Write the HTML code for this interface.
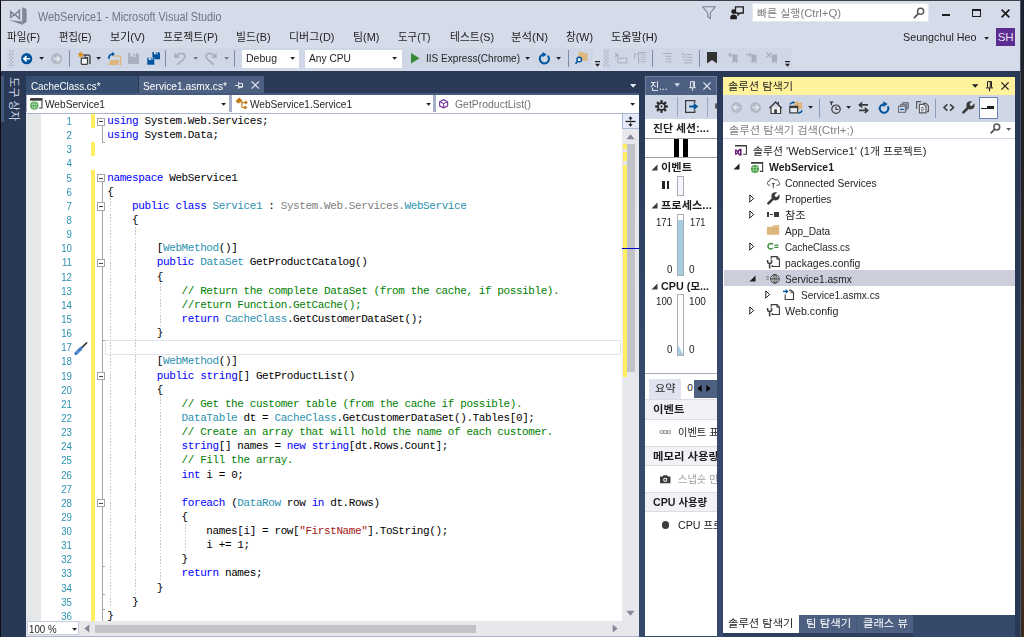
<!DOCTYPE html>
<html lang="ko">
<head>
<meta charset="utf-8">
<title>WebService1 - Microsoft Visual Studio</title>
<style>
*{box-sizing:border-box;margin:0;padding:0}
html,body{width:1024px;height:637px;overflow:hidden}
body{position:relative;background:#293955;font-family:"Liberation Sans","Noto Sans CJK KR",sans-serif;font-size:11px;color:#1e1e1e}
.a{position:absolute}
.t{position:absolute;white-space:nowrap;line-height:16px;height:16px;transform-origin:0 50%}
svg{position:absolute;overflow:visible}
#chrome{left:0;top:0;width:1021px;height:71px;background:#d6dbe9}
.h{font-size:0.97em}
.code{font-family:"Liberation Mono","NanumGothic",monospace;font-size:11px;letter-spacing:-0.41px;white-space:pre;line-height:14px;height:14px;color:#000}
.k{color:#0000ff}.ty{color:#2b91af}.c{color:#008000}.s{color:#a31515}.g{color:#808080}
.ln{position:absolute;left:41px;width:32px;text-align:right;color:#2b91af;font-family:"Liberation Sans","Noto Sans CJK KR",sans-serif;font-size:11px;line-height:14px;height:14px;transform:scaleX(0.88);transform-origin:100% 50%}
</style>
</head>
<body>
<div id="chrome" class="a"></div>
<div class="a" style="left:0;top:0;width:1021px;height:1px;background:#3f3f46"></div>
<div class="a" style="left:0;top:0;width:1px;height:637px;background:#0c0c12"></div>
<div class="a" style="left:1020px;top:0;width:1px;height:637px;background:#4a5268"></div>
<div class="a" style="left:1021px;top:0;width:3px;height:637px;background:linear-gradient(#1b1f2a,#2a2320 40%,#4a3320 80%,#3a2a1c)"></div>

<!-- title -->
<svg id="vslogo" style="left:0px;top:0px" width="30" height="28" viewBox="0 0 30 28"><path d="M22.200 7.200L26.600 9V22L22.200 24.700z" fill="#828795"/><path d="M8.800 20.100L22.300 21.500V24.700z" fill="#828795"/><path d="M10.700 11.600L14.300 14.500 10.700 17.400zM19.400 10.400L14.900 14.500 19.400 18.600z" fill="none" stroke="#828795" stroke-width="1.500" stroke-linejoin="miter"/></svg>
<div class="t" id="title" style="left:37.5px;top:8.8px;font-size:12px;color:#6f7480;transform:scaleX(0.9010);">WebService1 - Microsoft Visual Studio</div>

<div class="a" style="left:752px;top:3px;width:177px;height:19px;background:#fff;border:1px solid #e5e8f0"></div>
<div class="t" id="ql" style="left:757px;top:5px;color:#7e7e7e;transform:scaleX(1.0293);"><span class="h">빠른 실행</span>(Ctrl+Q)</div>

<!-- menu -->
<div class="t m" style="left:7px;top:29px;transform:scaleX(0.9622);">파일(F)</div>
<div class="t m" style="left:59px;top:29px;transform:scaleX(0.9311);">편집(E)</div>
<div class="t m" style="left:110px;top:29px;transform:scaleX(1.0027);">보기(V)</div>
<div class="t m" style="left:163px;top:29px;transform:scaleX(0.9972);">프로젝트(P)</div>
<div class="t m" style="left:236px;top:29px;transform:scaleX(0.9884);">빌드(B)</div>
<div class="t m" style="left:289px;top:29px;transform:scaleX(0.9969);">디버그(D)</div>
<div class="t m" style="left:353px;top:29px;transform:scaleX(0.9959);">팀(M)</div>
<div class="t m" style="left:398px;top:29px;transform:scaleX(0.9476);">도구(T)</div>
<div class="t m" style="left:450px;top:29px;transform:scaleX(0.9771);">테스트(S)</div>
<div class="t m" style="left:511px;top:29px;transform:scaleX(1.0418);">분석(N)</div>
<div class="t m" style="left:566px;top:29px;transform:scaleX(0.9697);">창(W)</div>
<div class="t m" style="left:611px;top:29px;transform:scaleX(1.0188);">도움말(H)</div>
<div class="t" id="user" style="left:903px;top:29px;transform:scaleX(0.9769);">Seungchul Heo</div>
<div class="a" style="left:996px;top:28px;width:19px;height:18px;background:#5c2d91;color:#eadff5;font-size:11.500px;line-height:18px;text-align:center;letter-spacing:-0.200px">SH</div>

<!-- toolbar strips -->
<div class="a" style="left:7px;top:47.700px;width:586px;height:21px;background:#cfd6e5"></div>
<div class="a" style="left:602.500px;top:47.700px;width:189px;height:21px;background:#cfd6e5"></div>
<div class="a" style="left:242px;top:50px;width:57px;height:18px;background:#fff"></div>
<div class="t" style="left:246px;top:50.2px;transform:scaleX(0.9561);">Debug</div>
<div class="a" style="left:305px;top:50px;width:97px;height:18px;background:#fff"></div>
<div class="t" style="left:309px;top:50.2px;transform:scaleX(0.9282);">Any CPU</div>
<div class="t" style="left:426px;top:50.2px;transform:scaleX(0.9153);">IIS Express(Chrome)</div>
<!-- title bar icons -->
<svg style="left:702px;top:5.5px" width="14" height="14" viewBox="0 0 14 14"><path d="M0.8 0.8h12.4L8.3 7v5.6L5.7 10.6V7z" fill="none" stroke="#7a8090" stroke-width="1.1" stroke-linejoin="round"/></svg>
<svg style="left:729.5px;top:5.5px" width="14" height="14" viewBox="0 0 14 14"><path d="M5.5 0.8h7.8v6.2h-3.3l-2 2v-2h-2.5z" fill="#d6dbe9" stroke="#1e1e1e" stroke-width="1.3"/><circle cx="3.6" cy="5.6" r="2.3" fill="#1e1e1e"/><path d="M0.3 13.2v-2.2c0-1.6 1.3-2.6 3.3-2.6s3.3 1 3.3 2.6v2.2z" fill="#1e1e1e"/></svg>
<svg style="left:913px;top:7px" width="12" height="12" viewBox="0 0 12 12"><circle cx="7.6" cy="4.3" r="3.1" fill="none" stroke="#555" stroke-width="1.4"/><path d="M5.3 6.7L0.9 11.1" stroke="#555" stroke-width="1.8" fill="none"/></svg>
<div class="a" style="left:942px;top:13.6px;width:8.4px;height:2.8px;background:#1e1e1e"></div>
<div class="a" style="left:972px;top:9px;width:8.6px;height:8.2px;border:1.2px solid #1e1e1e;border-top-width:2.6px"></div>
<svg style="left:1000.5px;top:9px" width="9" height="9" viewBox="0 0 9 9"><path d="M0.6 0.6l7.8 7.8M8.4 0.6L0.6 8.4" stroke="#1e1e1e" stroke-width="1.7" fill="none"/></svg>
<svg style="left:983.5px;top:36.5px" width="5.2" height="3.2" viewBox="0 0 6 4"><path d="M0 0h6L3 3.4z" fill="#1e1e1e"/></svg>

<!-- toolbar 1 -->
<svg style="left:8.9px;top:50px" width="5" height="17" viewBox="0 0 5 17"><g fill="#a0a8be"><rect x="0" y="0.20" width="1.300" height="1.300"/><rect x="3.300" y="0.20" width="1.300" height="1.300"/><rect x="0" y="3.85" width="1.300" height="1.300"/><rect x="3.300" y="3.85" width="1.300" height="1.300"/><rect x="0" y="7.50" width="1.300" height="1.300"/><rect x="3.300" y="7.50" width="1.300" height="1.300"/><rect x="0" y="11.15" width="1.300" height="1.300"/><rect x="3.300" y="11.15" width="1.300" height="1.300"/><rect x="0" y="14.80" width="1.300" height="1.300"/><rect x="3.300" y="14.80" width="1.300" height="1.300"/><rect x="1.650" y="2.00" width="1.300" height="1.300"/><rect x="1.650" y="5.65" width="1.300" height="1.300"/><rect x="1.650" y="9.30" width="1.300" height="1.300"/><rect x="1.650" y="12.95" width="1.300" height="1.300"/></g></svg>
<svg style="left:21px;top:52.8px" width="11.4" height="11.4" viewBox="0 0 12 12"><circle cx="6" cy="6" r="5.9" fill="#00539c"/><path d="M9.4 6H3.4M5.9 3.2L3 6l2.9 2.8" fill="none" stroke="#fff" stroke-width="1.7"/></svg>
<svg style="left:39px;top:57px" width="5.2" height="3.2" viewBox="0 0 6 4"><path d="M0 0h6L3 3.4z" fill="#1e1e1e"/></svg>
<svg style="left:50.8px;top:52.8px" width="11.4" height="11.4" viewBox="0 0 12 12"><circle cx="6" cy="6" r="5.9" fill="#b4b9c6"/><path d="M2.6 6h6M6.1 3.2L9 6 6.1 8.8" fill="none" stroke="#e6e9f1" stroke-width="1.7"/></svg>
<div class="a" style="left:69px;top:49.6px;width:1px;height:17.4px;background:#7f8aa6"></div>
<svg style="left:78px;top:51.8px" width="12.5" height="13" viewBox="0 0 12.5 13"><path d="M5.4 3.2h5.6c0.6 0 1 0.4 1 1v6.5c0 0.6-0.4 1-1 1" fill="none" stroke="#3b3b3b" stroke-width="1.3"/><rect x="3.3" y="6.2" width="6.2" height="6.2" rx="0.8" fill="#f3f4f8" stroke="#3b3b3b" stroke-width="1.2"/><path d="M7 2.2v3.3h3.2" fill="none" stroke="#3b3b3b" stroke-width="1"/><path d="M2.7 0v5.4M0 2.7h5.4M0.8 0.8l3.8 3.8M4.6 0.8L0.8 4.6" stroke="#e08a1e" stroke-width="1.1"/></svg>
<svg style="left:96px;top:57px" width="5.2" height="3.2" viewBox="0 0 6 4"><path d="M0 0h6L3 3.4z" fill="#1e1e1e"/></svg>
<svg style="left:107.5px;top:51.5px" width="13.5" height="13.5" viewBox="0 0 13.5 13.5"><path d="M5.2 4.2h7.4v8.6h-1" fill="none" stroke="#dcb67a" stroke-width="1.2"/><path d="M0.6 13l1.7-4.9h9.3L10 13z" fill="#dcb67a"/><path d="M1 6.8c-0.4-3 1.2-4.7 3.7-4.7" fill="none" stroke="#00539c" stroke-width="1.7"/><path d="M4 0l3 2.1-3 2.2z" fill="#00539c"/></svg>
<svg style="left:128px;top:53px" width="11" height="11" viewBox="0 0 11 11"><path d="M0 0h9.2L11 1.8V11H0z" fill="#a9afbd"/><rect x="2.4" y="0" width="5.6" height="3.6" fill="#cfd6e5"/><rect x="5.6" y="0.6" width="1.5" height="2.4" fill="#a9afbd"/></svg>
<svg style="left:146.8px;top:51.7px" width="13" height="13" viewBox="0 0 13 13"><path d="M5.4 0h6.4L13 1.2V7.2H5.4z" fill="#00539c"/><rect x="7" y="0" width="3.8" height="2.3" fill="#cfd6e5"/><rect x="9.2" y="0.4" width="1" height="1.5" fill="#00539c"/><path d="M0 5.6h6.4L7.6 6.8V13H0z" fill="#00539c" stroke="#cfd6e5" stroke-width="0.6"/><rect x="1.7" y="5.8" width="3.8" height="2.3" fill="#cfd6e5"/><rect x="3.9" y="6.2" width="1" height="1.5" fill="#00539c"/></svg>
<div class="a" style="left:165px;top:49.6px;width:1px;height:17.4px;background:#7f8aa6"></div>
<svg style="left:174px;top:51.500px" width="12" height="13" viewBox="0 0 12 13"><path d="M0.300 0.400V6H5.900z" fill="#a9afbd"/><path d="M2.800 3.600C5 0.600 10.900 0.300 10.900 4.600C10.900 7.600 6.500 9.600 3.700 12.100" fill="none" stroke="#a9afbd" stroke-width="1.800" stroke-linecap="round"/></svg>
<svg style="left:193px;top:56.800px" width="5.2" height="3.2" viewBox="0 0 6 4"><path d="M0 0h6L3 3.4z" fill="#77777c"/></svg>
<svg style="left:204.500px;top:51.500px" width="12" height="13" viewBox="0 0 12 13"><path d="M11.700 0.400V6H6.100z" fill="#a9afbd"/><path d="M9.200 3.600C7 0.600 1.100 0.300 1.100 4.600C1.100 7.600 5.500 9.600 8.300 12.100" fill="none" stroke="#a9afbd" stroke-width="1.800" stroke-linecap="round"/></svg>
<svg style="left:223.800px;top:56.800px" width="5.2" height="3.2" viewBox="0 0 6 4"><path d="M0 0h6L3 3.4z" fill="#77777c"/></svg>
<div class="a" style="left:234px;top:49.6px;width:1px;height:17.4px;background:#7f8aa6"></div>
<svg style="left:289.800px;top:57px" width="5.2" height="3.2" viewBox="0 0 6 4"><path d="M0 0h6L3 3.4z" fill="#1e1e1e"/></svg>
<svg style="left:392px;top:57px" width="5.2" height="3.2" viewBox="0 0 6 4"><path d="M0 0h6L3 3.4z" fill="#1e1e1e"/></svg>
<svg style="left:410.500px;top:53px" width="8.500" height="10.500" viewBox="0 0 8.500 10.500"><path d="M0 0L8.500 5.250 0 10.500z" fill="#388a34"/></svg>
<svg style="left:524.800px;top:57px" width="5.2" height="3.2" viewBox="0 0 6 4"><path d="M0 0h6L3 3.4z" fill="#1e1e1e"/></svg>
<svg style="left:537.500px;top:52px" width="12.500" height="12.500" viewBox="0 0 12.500 12.500"><path d="M9.800 3.700A4.600 4.600 0 1 1 5 2.400" fill="none" stroke="#00539c" stroke-width="2"/><path d="M4.600 0L8.600 2.500 4.600 5.200z" fill="#00539c"/></svg>
<svg style="left:556px;top:57px" width="5.2" height="3.2" viewBox="0 0 6 4"><path d="M0 0h6L3 3.4z" fill="#1e1e1e"/></svg>
<div class="a" style="left:567.500px;top:49.600px;width:1px;height:17.400px;background:#7f8aa6"></div>
<svg style="left:575px;top:51.800px" width="12.500" height="12.500" viewBox="0 0 12.500 12.500"><path d="M3.600 0h4l1 1.300h3.900v7.500H3.600z" fill="#dcb67a"/><circle cx="4.200" cy="7.600" r="2.300" fill="#e8f0fa" stroke="#00539c" stroke-width="1.400"/><path d="M2.700 9.300L0.500 11.800" stroke="#00539c" stroke-width="1.700"/></svg>
<svg style="left:594.500px;top:60.500px" width="5" height="6" viewBox="0 0 5 6"><rect x="0" y="0" width="5" height="1.200" fill="#1e1e1e"/><path d="M0 2.800h5L2.500 5.800z" fill="#1e1e1e"/></svg>
<!-- toolbar 2 -->
<svg style="left:604px;top:50px" width="5" height="17" viewBox="0 0 5 17"><g fill="#a0a8be"><rect x="0" y="0.20" width="1.300" height="1.300"/><rect x="3.300" y="0.20" width="1.300" height="1.300"/><rect x="0" y="3.85" width="1.300" height="1.300"/><rect x="3.300" y="3.85" width="1.300" height="1.300"/><rect x="0" y="7.50" width="1.300" height="1.300"/><rect x="3.300" y="7.50" width="1.300" height="1.300"/><rect x="0" y="11.15" width="1.300" height="1.300"/><rect x="3.300" y="11.15" width="1.300" height="1.300"/><rect x="0" y="14.80" width="1.300" height="1.300"/><rect x="3.300" y="14.80" width="1.300" height="1.300"/><rect x="1.650" y="2.00" width="1.300" height="1.300"/><rect x="1.650" y="5.65" width="1.300" height="1.300"/><rect x="1.650" y="9.30" width="1.300" height="1.300"/><rect x="1.650" y="12.95" width="1.300" height="1.300"/></g></svg>
<svg style="left:615px;top:52px" width="12.500" height="12" viewBox="0 0 12.500 12"><path d="M0.300 0L4.600 4.200 2.400 4.400 0.300 6z" fill="#a9afbd"/><rect x="2.800" y="6.200" width="9" height="4.600" fill="none" stroke="#a9afbd" stroke-width="1.100"/></svg>
<svg style="left:634px;top:52px" width="13" height="12" viewBox="0 0 13 12"><path d="M0.600 6.500V2.200H3.500" fill="none" stroke="#a9afbd" stroke-width="1.100"/><path d="M4.600 11.500V0.600H12.400" fill="none" stroke="#a9afbd" stroke-width="1.100"/><path d="M6.500 3h5.500M6.500 5.200h5.500M6.500 7.400h5.500M6.500 9.600h5.500" stroke="#b4bac8" stroke-width="1"/></svg>
<div class="a" style="left:652.200px;top:49.600px;width:1px;height:17.400px;background:#7f8aa6"></div>
<svg style="left:662px;top:53px" width="10" height="10" viewBox="0 0 10 10"><path d="M0.500 0.500h9M3.500 3.300h6M3.500 6.100h6M3.500 8.900h6" stroke="#a9afbd" stroke-width="1"/></svg>
<svg style="left:680.500px;top:52.500px" width="11.500" height="11" viewBox="0 0 11.500 11"><path d="M5 1.500h6.500M5 4.300h6.500M3 7.100h8.500M3 9.900h8.500" stroke="#a9afbd" stroke-width="1"/><path d="M0.500 1.800c0-1.500 3.200-1.500 3.200 0.300 0 1.200-1.600 1.300-1.600 2.800" fill="none" stroke="#a9afbd" stroke-width="1.100"/></svg>
<div class="a" style="left:698.800px;top:49.600px;width:1px;height:17.400px;background:#7f8aa6"></div>
<svg style="left:707.300px;top:52.200px" width="10" height="11.500" viewBox="0 0 10 11.500"><path d="M0 0h10v11.500L5 8 0 11.500z" fill="#333"/></svg>
<svg style="left:728px;top:52px" width="10" height="12" viewBox="0 0 10 12"><path d="M4.500 2.500h5v9L7 9.500l-2.500 2z" fill="#a9afbd"/><path d="M5.500 2.800H1M2.800 0.800L0.800 2.800 2.800 4.800" fill="none" stroke="#a9afbd" stroke-width="1.200"/></svg>
<svg style="left:746px;top:52px" width="11" height="12" viewBox="0 0 11 12"><path d="M5.500 2.500h5v9L8 9.500l-2.500 2z" fill="#a9afbd"/><path d="M0 2.800h5M3.200 0.800L5.200 2.800 3.200 4.800" fill="none" stroke="#a9afbd" stroke-width="1.200"/></svg>
<svg style="left:765.500px;top:52px" width="11.500" height="12" viewBox="0 0 11.500 12"><path d="M6 2.500h5v9L8.500 9.500 6 11.500z" fill="#a9afbd"/><path d="M0.500 0.500l5 5M5.500 0.500l-5 5" fill="none" stroke="#a9afbd" stroke-width="1.200"/></svg>
<svg style="left:784.500px;top:60.500px" width="5" height="6" viewBox="0 0 5 6"><rect x="0" y="0" width="5" height="1.200" fill="#1e1e1e"/><path d="M0 2.800h5L2.500 5.800z" fill="#1e1e1e"/></svg>
<div class="a" id="dockbg" style="left:26px;top:71px;width:989px;height:566px;background:linear-gradient(#293955 0,#2b3b5a 8%,#35496a 50%,#35496a 100%)"></div>
<!-- left autohide strip -->
<div class="a" style="left:1px;top:76px;width:3px;height:46px;background:#465a7d"></div>
<div class="t" id="toolbox" style="left:7.300px;top:76.500px;width:45px;height:14px;line-height:14px;font-size:11.5px;color:#d0d6e4;transform:rotate(90deg) translate(0,-14px);transform-origin:0 0"><span class="h">도구 상자</span></div>

<!-- doc tabs -->
<div class="a" style="left:26px;top:76px;width:112px;height:17px;background:#364e6f"></div>
<div class="t" style="left:30.500px;top:77.500px;color:#fff;transform:scaleX(0.8951);">CacheClass.cs*</div>
<div class="a" style="left:139px;top:76px;width:125.4px;height:17px;background:#4d6082"></div>
<div class="t" style="left:142.500px;top:77.500px;color:#fff;transform:scaleX(0.9283);">Service1.asmx.cs*</div>
<div class="a" style="left:26px;top:93px;width:613px;height:2px;background:#465a7d"></div>
<svg style="left:630.200px;top:84px" width="6.400" height="3.800" viewBox="0 0 10 6"><path d="M0 0h10L5 6z" fill="#e4e8f2"/></svg>
<!-- pin + close -->
<svg style="left:234.800px;top:81.800px" width="8" height="7" viewBox="0 0 8 7"><path d="M0 3.500h3.700M3.700 0v7M3.700 1.400h3.800v3.900H3.700M3.700 4.600h3.800" fill="none" stroke="#dfe3ee" stroke-width="1"/></svg>
<svg style="left:251.200px;top:81px" width="8.600" height="8" viewBox="0 0 8.600 8"><path d="M0.500 0.400l7.600 7.200M8.100 0.400L0.500 7.600" fill="none" stroke="#dde1ec" stroke-width="1.300"/></svg>
<!-- editor -->
<div class="a" id="ed" style="left:26px;top:95px;width:613px;height:542px;overflow:hidden;background:#fff">
<div class="a" style="left:0.00px;top:18.00px;width:15.40px;height:508.00px;background:#e6e7e8"></div>
<div class="a" style="left:64.70px;top:18.60px;width:4.40px;height:14.14px;background:#ffee62"></div>
<div class="a" style="left:64.70px;top:46.88px;width:4.40px;height:14.14px;background:#ffee62"></div>
<div class="a" style="left:64.70px;top:75.16px;width:4.40px;height:450.84px;background:#ffee62"></div>
<div class="a" style="left:78.80px;top:245.30px;width:516.20px;height:14.40px;background:#fff;border:1.5px solid #e3e3ee"></div>
<div class="a" style="left:84.30px;top:103.44px;width:1px;height:410.06px;background:repeating-linear-gradient(#c8c8c8 0,#c8c8c8 1.6px,transparent 1.6px,transparent 3.2px)"></div>
<div class="a" style="left:109.10px;top:131.72px;width:1px;height:367.64px;background:repeating-linear-gradient(#c8c8c8 0,#c8c8c8 1.6px,transparent 1.6px,transparent 3.2px)"></div>
<div class="a" style="left:133.90px;top:188.28px;width:1px;height:42.42px;background:repeating-linear-gradient(#c8c8c8 0,#c8c8c8 1.6px,transparent 1.6px,transparent 3.2px)"></div>
<div class="a" style="left:133.90px;top:301.40px;width:1px;height:183.82px;background:repeating-linear-gradient(#c8c8c8 0,#c8c8c8 1.6px,transparent 1.6px,transparent 3.2px)"></div>
<div class="a" style="left:158.70px;top:428.66px;width:1px;height:28.28px;background:repeating-linear-gradient(#c8c8c8 0,#c8c8c8 1.6px,transparent 1.6px,transparent 3.2px)"></div>
<div class="a" style="left:75.60px;top:30.60px;width:1.00px;height:16.78px;background:#a5a5a5"></div>
<div class="a" style="left:75.60px;top:46.58px;width:3.40px;height:1.00px;background:#a5a5a5"></div>
<div class="a" style="left:75.60px;top:87.16px;width:1.00px;height:438.84px;background:#a5a5a5"></div>
<div class="a" style="left:75.60px;top:244.94px;width:3.40px;height:1.00px;background:#a5a5a5"></div>
<div class="a" style="left:75.60px;top:471.18px;width:3.40px;height:1.00px;background:#a5a5a5"></div>
<div class="a" style="left:75.60px;top:499.46px;width:3.40px;height:1.00px;background:#a5a5a5"></div>
<div class="a" style="left:75.60px;top:513.60px;width:3.40px;height:1.00px;background:#a5a5a5"></div>
<div class="a" style="left:71.30px;top:22.60px;width:8.1px;height:8.1px;background:#fff;border:1px solid #a5a5a5"></div>
<div class="a" style="left:73.20px;top:26.15px;width:4.20px;height:1.00px;background:#444"></div>
<div class="a" style="left:71.30px;top:79.16px;width:8.1px;height:8.1px;background:#fff;border:1px solid #a5a5a5"></div>
<div class="a" style="left:73.20px;top:82.71px;width:4.20px;height:1.00px;background:#444"></div>
<div class="a" style="left:71.30px;top:107.44px;width:8.1px;height:8.1px;background:#fff;border:1px solid #a5a5a5"></div>
<div class="a" style="left:73.20px;top:110.99px;width:4.20px;height:1.00px;background:#444"></div>
<div class="a" style="left:71.30px;top:164.00px;width:8.1px;height:8.1px;background:#fff;border:1px solid #a5a5a5"></div>
<div class="a" style="left:73.20px;top:167.55px;width:4.20px;height:1.00px;background:#444"></div>
<div class="a" style="left:71.30px;top:277.12px;width:8.1px;height:8.1px;background:#fff;border:1px solid #a5a5a5"></div>
<div class="a" style="left:73.20px;top:280.67px;width:4.20px;height:1.00px;background:#444"></div>
<div class="a" style="left:71.30px;top:404.38px;width:8.1px;height:8.1px;background:#fff;border:1px solid #a5a5a5"></div>
<div class="a" style="left:73.20px;top:407.93px;width:4.20px;height:1.00px;background:#444"></div>
<div class="ln" style="top:19.00px;left:14px">1</div>
<div class="a code" style="left:81.30px;top:19.00px"><span class="k">using</span> System.Web.Services;</div>
<div class="ln" style="top:33.14px;left:14px">2</div>
<div class="a code" style="left:81.30px;top:33.14px"><span class="k">using</span> System.Data;</div>
<div class="ln" style="top:47.28px;left:14px">3</div>
<div class="ln" style="top:61.42px;left:14px">4</div>
<div class="ln" style="top:75.56px;left:14px">5</div>
<div class="a code" style="left:81.30px;top:75.56px"><span class="k">namespace</span> WebService1</div>
<div class="ln" style="top:89.70px;left:14px">6</div>
<div class="a code" style="left:81.30px;top:89.70px">{</div>
<div class="ln" style="top:103.84px;left:14px">7</div>
<div class="a code" style="left:81.30px;top:103.84px">    <span class="k">public</span> <span class="k">class</span> <span class="ty">Service1</span> : <span class="g">System.Web.Services.</span><span class="ty">WebService</span></div>
<div class="ln" style="top:117.98px;left:14px">8</div>
<div class="a code" style="left:81.30px;top:117.98px">    {</div>
<div class="ln" style="top:132.12px;left:14px">9</div>
<div class="ln" style="top:146.26px;left:14px">10</div>
<div class="a code" style="left:81.30px;top:146.26px">        [<span class="ty">WebMethod</span>()]</div>
<div class="ln" style="top:160.40px;left:14px">11</div>
<div class="a code" style="left:81.30px;top:160.40px">        <span class="k">public</span> <span class="ty">DataSet</span> GetProductCatalog()</div>
<div class="ln" style="top:174.54px;left:14px">12</div>
<div class="a code" style="left:81.30px;top:174.54px">        {</div>
<div class="ln" style="top:188.68px;left:14px">13</div>
<div class="a code" style="left:81.30px;top:188.68px">            <span class="c">// Return the complete DataSet (from the cache, if possible).</span></div>
<div class="ln" style="top:202.82px;left:14px">14</div>
<div class="a code" style="left:81.30px;top:202.82px">            <span class="c">//return Function.GetCache();</span></div>
<div class="ln" style="top:216.96px;left:14px">15</div>
<div class="a code" style="left:81.30px;top:216.96px">            <span class="k">return</span> <span class="ty">CacheClass</span>.GetCustomerDataSet();</div>
<div class="ln" style="top:231.10px;left:14px">16</div>
<div class="a code" style="left:81.30px;top:231.10px">        }</div>
<div class="ln" style="top:245.24px;left:14px">17</div>
<div class="ln" style="top:259.38px;left:14px">18</div>
<div class="a code" style="left:81.30px;top:259.38px">        [<span class="ty">WebMethod</span>()]</div>
<div class="ln" style="top:273.52px;left:14px">19</div>
<div class="a code" style="left:81.30px;top:273.52px">        <span class="k">public</span> <span class="k">string</span>[] GetProductList()</div>
<div class="ln" style="top:287.66px;left:14px">20</div>
<div class="a code" style="left:81.30px;top:287.66px">        {</div>
<div class="ln" style="top:301.80px;left:14px">21</div>
<div class="a code" style="left:81.30px;top:301.80px">            <span class="c">// Get the customer table (from the cache if possible).</span></div>
<div class="ln" style="top:315.94px;left:14px">22</div>
<div class="a code" style="left:81.30px;top:315.94px">            <span class="ty">DataTable</span> dt = <span class="ty">CacheClass</span>.GetCustomerDataSet().Tables[0];</div>
<div class="ln" style="top:330.08px;left:14px">23</div>
<div class="a code" style="left:81.30px;top:330.08px">            <span class="c">// Create an array that will hold the name of each customer.</span></div>
<div class="ln" style="top:344.22px;left:14px">24</div>
<div class="a code" style="left:81.30px;top:344.22px">            <span class="k">string</span>[] names = <span class="k">new</span> <span class="k">string</span>[dt.Rows.Count];</div>
<div class="ln" style="top:358.36px;left:14px">25</div>
<div class="a code" style="left:81.30px;top:358.36px">            <span class="c">// Fill the array.</span></div>
<div class="ln" style="top:372.50px;left:14px">26</div>
<div class="a code" style="left:81.30px;top:372.50px">            <span class="k">int</span> i = 0;</div>
<div class="ln" style="top:386.64px;left:14px">27</div>
<div class="ln" style="top:400.78px;left:14px">28</div>
<div class="a code" style="left:81.30px;top:400.78px">            <span class="k">foreach</span> (<span class="ty">DataRow</span> row <span class="k">in</span> dt.Rows)</div>
<div class="ln" style="top:414.92px;left:14px">29</div>
<div class="a code" style="left:81.30px;top:414.92px">            {</div>
<div class="ln" style="top:429.06px;left:14px">30</div>
<div class="a code" style="left:81.30px;top:429.06px">                names[i] = row[<span class="s">&quot;FirstName&quot;</span>].ToString();</div>
<div class="ln" style="top:443.20px;left:14px">31</div>
<div class="a code" style="left:81.30px;top:443.20px">                i += 1;</div>
<div class="ln" style="top:457.34px;left:14px">32</div>
<div class="a code" style="left:81.30px;top:457.34px">            }</div>
<div class="ln" style="top:471.48px;left:14px">33</div>
<div class="a code" style="left:81.30px;top:471.48px">            <span class="k">return</span> names;</div>
<div class="ln" style="top:485.62px;left:14px">34</div>
<div class="a code" style="left:81.30px;top:485.62px">        }</div>
<div class="ln" style="top:499.76px;left:14px">35</div>
<div class="a code" style="left:81.30px;top:499.76px">    }</div>
<div class="ln" style="top:513.90px;left:14px">36</div>
<div class="a code" style="left:81.30px;top:513.90px">}</div>
<svg style="left:47.8px;top:246.5px" width="13.5" height="13" viewBox="0 0 13.5 13"><path d="M12.600 0.800L6.200 7.200" stroke="#3b3b3b" stroke-width="1.700" stroke-linecap="round"/><path d="M6.800 6.600L2 11.400" stroke="#3a7bc8" stroke-width="3.400" stroke-linecap="round"/><path d="M3.600 8.200l1.800 1.800M2.400 9.400l1.800 1.800" stroke="#9cc3ee" stroke-width="0.700"/></svg>
</div>
<!-- nav bar (drawn over editor top) -->
<div class="a" style="left:26px;top:95px;width:613px;height:18.6px;background:#fff;border-bottom:1.2px solid #a9b3cc"></div>
<div class="a" style="left:229.4px;top:95px;width:3px;height:17.4px;background:#a7b0c8"></div>
<div class="a" style="left:432.8px;top:95px;width:3.4px;height:17.4px;background:#a7b0c8"></div>
<div class="t" style="left:45px;top:96px;transform:scaleX(0.9200);">WebService1</div>
<div class="t" style="left:250.4px;top:96px;transform:scaleX(0.9183);">WebService1.Service1</div>
<div class="t" style="left:454.6px;top:96px;color:#717171;transform:scaleX(0.9489);">GetProductList()</div>
<svg style="left:221px;top:102.5px" width="5.2" height="3.2" viewBox="0 0 6 4"><path d="M0 0h6L3 3.6z" fill="#1e1e1e"/></svg>
<svg style="left:425.5px;top:102.5px" width="5.2" height="3.2" viewBox="0 0 6 4"><path d="M0 0h6L3 3.6z" fill="#1e1e1e"/></svg>
<svg style="left:630px;top:102.5px" width="5.2" height="3.2" viewBox="0 0 6 4"><path d="M0 0h6L3 3.6z" fill="#1e1e1e"/></svg>

<!-- vertical scrollbar -->
<div class="a" style="left:622px;top:113.6px;width:17px;height:508px;background:#e8e8ec"></div>
<div class="a" style="left:622px;top:113.6px;width:17px;height:15px;background:#e4eafa;border-left:1px solid #a9b7d8;border-bottom:1px solid #a9b7d8"></div>
<svg style="left:625px;top:116px" width="11" height="11" viewBox="0 0 11 11"><path d="M0.5 5.5h10" stroke="#1e1e1e" stroke-width="1.3" fill="none"/><path d="M5.5 0.3l2.2 2.4h-1.6v1.6h-1.2v-1.6h-1.6zM5.5 10.7l2.2-2.4h-1.6v-1.6h-1.2v1.6h-1.6z" fill="#1e1e1e"/></svg>
<svg style="left:626px;top:134px" width="9" height="6" viewBox="0 0 9 6"><path d="M4.5 0.3L8.6 5.3H0.4z" fill="#868999"/></svg>
<svg style="left:626px;top:609.500px" width="9" height="6" viewBox="0 0 9 6"><path d="M4.5 5.7L8.6 0.7H0.4z" fill="#868999"/></svg>
<div class="a" style="left:626.8px;top:144.2px;width:8.1px;height:228px;background:#c2c3c9"></div>
<div class="a" style="left:623px;top:144.2px;width:3.8px;height:5.3px;background:#ffee62"></div>
<div class="a" style="left:623px;top:152.4px;width:3.8px;height:9.1px;background:#ffee62"></div>
<div class="a" style="left:623px;top:165.4px;width:3.8px;height:212px;background:#ffee62"></div>
<div class="a" style="left:621.5px;top:247.9px;width:17px;height:1.5px;background:#0000cd"></div>

<!-- bottom bar -->
<div class="a" style="left:26px;top:621px;width:613px;height:15px;background:#e8e8ec"></div>
<div class="a" style="left:26.500px;top:621.300px;width:52.500px;height:14.200px;background:#fff;border:1px solid #c4cbdc"></div>
<div class="t" style="left:28.5px;top:620.5px;font-size:11.5px;transform:scaleX(0.8433);">100 %</div>
<svg style="left:71.800px;top:627.500px" width="5.2" height="3.2" viewBox="0 0 6 4"><path d="M0 0h6L3 3.6z" fill="#1e1e1e"/></svg>
<svg style="left:84px;top:624px" width="6" height="9" viewBox="0 0 6 9"><path d="M0.3 4.5L5.3 0.4V8.6z" fill="#868999"/></svg>
<svg style="left:612px;top:624px" width="6" height="9" viewBox="0 0 6 9"><path d="M5.7 4.5L0.7 0.4V8.6z" fill="#868999"/></svg>
<div class="a" style="left:94.7px;top:624.5px;width:381px;height:8px;background:#c2c3c9"></div>
<div class="a" style="left:26px;top:635.600px;width:613px;height:1.400px;background:#a9b2c8"></div>
<!-- nav icons -->
<div class="a" style="left:26px;top:95px;width:1px;height:17.400px;background:#a7b0c8"></div>
<svg style="left:29.800px;top:98px" width="13" height="12" viewBox="0 0 13 12"><path d="M0.200 0.200h12.200v10.400h-3.400v-1.100h2.300V2.400H0.200z" fill="#3b3b3b"/><path d="M0.200 0.200h12.200v2.200H0.200z" fill="#3b3b3b"/><path d="M11.300 2.400h1.100v8.200h-1.100z" fill="#8a8a8a"/><circle cx="4.300" cy="7.700" r="4.100" fill="#3c9a3e"/><path d="M0.800 6.300h7M0.600 9h7.400M4.300 3.800v7.800" stroke="#bfe3bf" stroke-width="0.700" fill="none"/><ellipse cx="4.300" cy="7.700" rx="2" ry="4" fill="none" stroke="#bfe3bf" stroke-width="0.600"/></svg>
<svg style="left:234.800px;top:97px" width="13" height="13" viewBox="0 0 13 13"><g fill="#c27d1a"><path d="M0.500 3.900L4.400 0.600 7.200 3.400 3.300 6.700z"/><path d="M10.800 3.600l2 2-2 2-2-2z"/><path d="M10.200 8.500l2 2-2 2-2-2z"/></g><path d="M5 4.800h1.900v5.700h2M6.900 5.600h2.400" fill="none" stroke="#c27d1a" stroke-width="1.100"/></svg>
<svg style="left:439px;top:98.800px" width="9.200" height="9.400" viewBox="0 0 9.200 9.400"><path d="M4.600 0.600L8.600 2.700V6.900L4.600 8.900 0.600 6.900V2.700z" fill="none" stroke="#7b3fa3" stroke-width="1.200" stroke-linejoin="round"/><path d="M0.800 2.800L4.600 4.700 8.400 2.800M4.600 4.700V8.800" fill="none" stroke="#7b3fa3" stroke-width="1.100"/></svg>
<!-- diagnostics panel -->
<div class="a" id="diag" style="left:644.5px;top:76.4px;width:72px;height:560px;background:#fff;overflow:hidden">
<div class="a" style="left:0;top:0;width:72px;height:19px;background:#4d6082;border:1px solid #6b7ca0;border-bottom:none"></div>
<div class="t" style="left:5.4px;top:1.3px;color:#fff;transform:scaleX(0.9218);"><span class="h">진</span>...</div>
<div class="a" style="left:0;top:19px;width:72px;height:23.3px;background:#cfd6e5"></div>
<div class="a" style="left:32.6px;top:21px;width:1px;height:19.2px;background:#9aa6c0"></div>
<div class="a" style="left:62.7px;top:21px;width:1px;height:19.2px;background:#9aa6c0"></div>

<svg style="left:29.6px;top:7.1px" width="6.400" height="4" viewBox="0 0 7 5"><path d="M0 0.300h7L3.500 4.600z" fill="#d5dae6"/></svg>
<svg style="left:44.1px;top:4.8px" width="7" height="10" viewBox="0 0 7 10"><path d="M1.500 6.300V0.600h4v5.700M4.300 0.600v5.700M0 6.700h7M3.500 6.700V9.800" fill="none" stroke="#dde1ec" stroke-width="1"/></svg>
<svg style="left:58.0px;top:5.6px" width="8" height="8" viewBox="0 0 8 8"><path d="M0.400 0.400l7.200 7.200M7.600 0.400L0.400 7.600" fill="none" stroke="#e6e9f2" stroke-width="1.300"/></svg>
<svg style="left:10.4px;top:24.1px" width="13" height="13" viewBox="-6.500 -6.500 13 13"><g fill="#2b2b2b"><circle r="4.100"/><rect x="-1.200" y="-6.300" width="2.400" height="12.600"/><rect x="-1.200" y="-6.300" width="2.400" height="12.600" transform="rotate(45)"/><rect x="-1.200" y="-6.300" width="2.400" height="12.600" transform="rotate(90)"/><rect x="-1.200" y="-6.300" width="2.400" height="12.600" transform="rotate(135)"/></g><circle r="2.600" fill="#cfd6e5"/><circle r="1" fill="#2b2b2b"/></svg>
<svg style="left:40.1px;top:24.0px" width="14" height="13" viewBox="0 0 14 13"><path d="M9.800 3.200V0.600H0.600V12.400H9.800V9.800" fill="none" stroke="#3b3b3b" stroke-width="1.200"/><path d="M4.200 6.500H11" stroke="#00539c" stroke-width="2" fill="none"/><path d="M8.600 2.800L13.200 6.500 8.600 10.200z" fill="#00539c"/></svg>
<div class="a" style="left:70.3px;top:27.1px;width:2px;height:6px;border-radius:2px 0 0 2px;background:#555"></div>
<div class="t" style="left:8.5px;top:43.5px;font-weight:bold;transform:scaleX(1.0176);"><span class="h">진단 세션</span>:...</div>
<div class="a" style="left:0;top:61.7px;width:72px;height:1px;background:#a0a0a0"></div>
<div class="a" style="left:29.2px;top:62.7px;width:5px;height:18px;background:#000"></div>
<div class="a" style="left:38.8px;top:62.7px;width:5px;height:18px;background:#000"></div>
<div class="a" style="left:0;top:80.6px;width:72px;height:1px;background:#a0a0a0"></div>

<svg style="left:6.5px;top:88px" width="7" height="7" viewBox="0 0 7 7"><path d="M6.5 0.5v6h-6z" fill="#3b3b3b"/></svg>
<div class="t" style="left:16.5px;top:83px;font-weight:bold;transform:scaleX(1.0536);"><span class="h">이벤트</span></div>
<div class="a" style="left:17.5px;top:105px;width:2.6px;height:7.8px;background:#222"></div>
<div class="a" style="left:22.3px;top:105px;width:2.6px;height:7.8px;background:#222"></div>
<div class="a" style="left:32.2px;top:100px;width:7.8px;height:19.3px;background:#f5f7fc;border:1px solid #a8adba"></div>

<svg style="left:6.5px;top:125.5px" width="7" height="7" viewBox="0 0 7 7"><path d="M6.5 0.5v6h-6z" fill="#3b3b3b"/></svg>
<div class="t" style="left:16.5px;top:120.5px;font-weight:bold;transform:scaleX(1.0539);"><span class="h">프로세스</span>...</div>
<div class="t" style="left:11.5px;top:137.4px;transform:scaleX(0.8715);">171</div>
<div class="t" style="left:45px;top:137.4px;transform:scaleX(0.8443);">171</div>
<div class="a" style="left:32.8px;top:138px;width:7px;height:61.3px;background:#fff;border:1px solid #a8adba"></div>
<div class="a" style="left:33.6px;top:143.5px;width:5.4px;height:55px;background:#a9cde0"></div>
<div class="t" style="left:22.6px;top:185px;transform:scaleX(0.8816);">0</div>
<div class="t" style="left:44.5px;top:185px;transform:scaleX(0.9143);">0</div>

<svg style="left:6.5px;top:206.5px" width="7" height="7" viewBox="0 0 7 7"><path d="M6.5 0.5v6h-6z" fill="#3b3b3b"/></svg>
<div class="t" style="left:16.5px;top:201.3px;font-weight:bold;transform:scaleX(0.9808);">CPU (<span class="h">모</span>...</div>
<div class="t" style="left:11.8px;top:216.6px;transform:scaleX(0.8824);">100</div>
<div class="t" style="left:44.9px;top:216.6px;transform:scaleX(0.9205);">100</div>
<div class="a" style="left:32.8px;top:217.5px;width:7px;height:61.8px;background:#fff;border:1px solid #a8adba"></div>
<svg style="left:33.6px;top:268.5px" width="6" height="10" viewBox="0 0 6 10"><path d="M0 0L5.6 10H0z" fill="#a9cde0"/></svg>
<div class="t" style="left:22.6px;top:264.6px;transform:scaleX(0.8816);">0</div>
<div class="t" style="left:44.5px;top:264.6px;transform:scaleX(0.9143);">0</div>

<div class="a" style="left:0;top:296.600px;width:72px;height:1.200px;background:#a6abbb"></div>
<div class="a" style="left:4px;top:302.2px;width:32px;height:20.4px;background:#e0e3ef"></div>
<div class="t" style="left:10.2px;top:303.2px;transform:scaleX(1.0556);"><span class="h">요약</span></div>
<div class="t" style="left:42.2px;top:303.2px;"><span class="h">이</span></div>
<div class="a" style="left:49.3px;top:303.3px;width:23px;height:18.7px;background:#4d6082"></div>
<svg style="left:52.5px;top:309px" width="5" height="7" viewBox="0 0 5 7"><path d="M4.6 0v7L0.3 3.5z" fill="#000"/></svg>
<svg style="left:61.5px;top:309px" width="5" height="7" viewBox="0 0 5 7"><path d="M0.4 0v7l4.3-3.5z" fill="#000"/></svg>

<div class="a" style="left:0;top:323.1px;width:72px;height:20.7px;background:#f2f2f6;border-top:1px solid #dcdce4;border-bottom:1px solid #dcdce4"></div>
<div class="t" style="left:8.8px;top:325px;font-weight:bold;transform:scaleX(1.0672);"><span class="h">이벤트</span></div>
<div class="t" style="left:15px;top:348px;font-size:8px;color:#666;letter-spacing:-1px">ooo</div>
<div class="t" style="left:33.7px;top:348px;transform:scaleX(0.9618);"><span class="h">이벤트 표시</span></div>
<div class="a" style="left:0;top:369.3px;width:72px;height:20.3px;background:#f2f2f6;border-top:1px solid #dcdce4;border-bottom:1px solid #dcdce4"></div>
<div class="t" style="left:8.8px;top:371.2px;font-weight:bold;transform:scaleX(1.0680);"><span class="h">메모리 사용량</span></div>
<svg style="left:15.300px;top:398.300px" width="10.500" height="8.500" viewBox="0 0 10.500 8.500"><path d="M0 1.600h2.600l0.800-1.400h3.700l0.800 1.400h2.600v6.700H0z" fill="#3b3b3b"/><circle cx="5.250" cy="4.800" r="2.100" fill="#fff"/><circle cx="5.250" cy="4.800" r="1.100" fill="#3b3b3b"/></svg>
<div class="t" style="left:33.7px;top:394.6px;color:#a0a0a0;transform:scaleX(0.9618);"><span class="h">스냅숏 만들</span></div>
<div class="a" style="left:0;top:416px;width:72px;height:19.6px;background:#f2f2f6;border-top:1px solid #dcdce4;border-bottom:1px solid #dcdce4"></div>
<div class="t" style="left:8.8px;top:417.9px;font-weight:bold;transform:scaleX(0.9694);">CPU <span class="h">사용량</span></div>
<div class="a" style="left:17px;top:445.100px;width:7.200px;height:7.200px;border-radius:4px;background:#3b3b3b"></div>
<div class="t" style="left:33.1px;top:440.6px;transform:scaleX(0.9694);">CPU <span class="h">프로필</span></div>
<div class="a" style="left:0;top:559.6px;width:72px;height:1px;background:#7f8aa6"></div>
</div>
<!-- solution explorer -->
<div class="a" id="se" style="left:723px;top:76.7px;width:292px;height:560px;overflow:hidden">
<div class="a" style="left:0;top:0;width:292px;height:18.7px;background:#fff29d"></div>
<div class="t" style="left:4.7px;top:1.6px;color:#1e1e1e;transform:scaleX(1.0551);"><span class="h">솔루션 탐색기</span></div>
<div class="a" style="left:0;top:18.7px;width:292px;height:26.3px;background:#cfd6e5"></div>
<div class="a" style="left:0;top:45px;width:292px;height:16px;background:#fff"></div>
<div class="t" style="left:5.5px;top:45.4px;color:#808080;transform:scaleX(1.0543);"><span class="h">솔루션 탐색기 검색</span>(Ctrl+;)</div>
<div class="a" style="left:0;top:61px;width:292px;height:1.6px;background:#cfd6e5"></div>
<div class="a" style="left:0;top:62.6px;width:292px;height:475.7px;background:#fff"></div>
<div class="a" style="left:96.1px;top:22px;width:1px;height:19px;background:#8e9bbc"></div>
<div class="a" style="left:212.4px;top:22px;width:1px;height:19px;background:#8e9bbc"></div>
<div class="a" style="left:255.5px;top:20.8px;width:19px;height:21.2px;background:#fdfdfb;border:1px solid #6c85b5"></div>
<div class="a" style="left:1px;top:193.4px;width:291px;height:16.1px;background:#cccedb"></div>
<div class="t" style="left:30.4px;top:66.4px;transform:scaleX(1.0188);"><span class="h">솔루션</span> 'WebService1' (1<span class="h">개 프로젝트</span>)</div>
<div class="t" style="left:45.9px;top:82.4px;font-weight:bold;transform:scaleX(0.9517);">WebService1</div>
<div class="t" style="left:61.7px;top:98.4px;transform:scaleX(0.9314);">Connected Services</div>
<div class="t" style="left:61.7px;top:114.4px;transform:scaleX(0.9254);">Properties</div>
<div class="t" style="left:61.7px;top:130.4px;transform:scaleX(1.0505);"><span class="h">참조</span></div>
<div class="t" style="left:61.7px;top:146.4px;transform:scaleX(0.9236);">App_Data</div>
<div class="t" style="left:61.7px;top:162.4px;transform:scaleX(0.8833);">CacheClass.cs</div>
<div class="t" style="left:61.7px;top:178.4px;transform:scaleX(0.9484);">packages.config</div>
<div class="t" style="left:61.7px;top:194.4px;transform:scaleX(0.9260);">Service1.asmx</div>
<div class="t" style="left:77.9px;top:210.4px;transform:scaleX(0.9130);">Service1.asmx.cs</div>
<div class="t" style="left:61.7px;top:226.4px;transform:scaleX(0.9740);">Web.config</div>
<svg style="left:10.2px;top:86.6px" width="7" height="7" viewBox="0 0 7 7"><path d="M6.5 0.5v6h-6z" fill="#1e1e1e"/></svg>
<svg style="left:25.6px;top:117.6px" width="6" height="9" viewBox="0 0 6 9"><path d="M0.8 0.9v7.2l3.9-3.6z" fill="#fff" stroke="#1e1e1e" stroke-width="1"/></svg>
<svg style="left:25.6px;top:133.6px" width="6" height="9" viewBox="0 0 6 9"><path d="M0.8 0.9v7.2l3.9-3.6z" fill="#fff" stroke="#1e1e1e" stroke-width="1"/></svg>
<svg style="left:25.6px;top:165.6px" width="6" height="9" viewBox="0 0 6 9"><path d="M0.8 0.9v7.2l3.9-3.6z" fill="#fff" stroke="#1e1e1e" stroke-width="1"/></svg>
<svg style="left:26.0px;top:198.6px" width="7" height="7" viewBox="0 0 7 7"><path d="M6.5 0.5v6h-6z" fill="#1e1e1e"/></svg>
<svg style="left:41.6px;top:213.6px" width="6" height="9" viewBox="0 0 6 9"><path d="M0.8 0.9v7.2l3.9-3.6z" fill="#fff" stroke="#1e1e1e" stroke-width="1"/></svg>
<svg style="left:25.6px;top:229.6px" width="6" height="9" viewBox="0 0 6 9"><path d="M0.8 0.9v7.2l3.9-3.6z" fill="#fff" stroke="#1e1e1e" stroke-width="1"/></svg>
<div class="a" style="left:0;top:538.3px;width:76.4px;height:17.8px;background:#fff"></div>
<div class="a" style="left:76.4px;top:538.3px;width:113.8px;height:17.8px;background:#4d6082"></div>
<div class="a" style="left:132.6px;top:539.3px;width:1px;height:16.8px;background:#43567a"></div>
<div class="a" style="left:0;top:556.1px;width:190.200px;height:4px;background:#2e3e5d"></div>
<div class="t" style="left:4.8px;top:538.5px;color:#1e1e1e;transform:scaleX(1.0599);"><span class="h">솔루션 탐색기</span></div>
<div class="t" style="left:82.8px;top:538.5px;color:#fff;transform:scaleX(1.0714);"><span class="h">팀 탐색기</span></div>
<div class="t" style="left:139.7px;top:538.5px;color:#fff;transform:scaleX(1.0643);"><span class="h">클래스 뷰</span></div>
<!--SEICONS-->
<svg style="left:249.2px;top:7.5px" width="6.4" height="4" viewBox="0 0 6.4 4"><path d="M0 0.200h6.400L3.200 3.800z" fill="#1e1e1e"/></svg>
<svg style="left:263.3px;top:4.1px" width="7" height="10.5" viewBox="0 0 7 10.5"><path d="M1.500 6.500V0.600h4v5.900M4.300 0.600v5.900M0 6.900h7M3.500 6.900V10.300" fill="none" stroke="#1e1e1e" stroke-width="1"/></svg>
<svg style="left:277.7px;top:5.3px" width="8" height="8" viewBox="0 0 8 8"><path d="M0.400 0.400l7.200 7.200M7.600 0.400L0.400 7.600" fill="none" stroke="#1e1e1e" stroke-width="1.300"/></svg>
<svg style="left:8.0px;top:25.7px" width="11" height="11" viewBox="0 0 11 11"><circle cx="5.500" cy="5.500" r="5.400" fill="#b4b9c6"/><path d="M8.600 5.500H3M5.400 2.900L2.700 5.500l2.700 2.600" fill="none" stroke="#dfe3ec" stroke-width="1.600"/></svg>
<svg style="left:27.4px;top:25.7px" width="11" height="11" viewBox="0 0 11 11"><circle cx="5.500" cy="5.500" r="5.400" fill="#b4b9c6"/><path d="M2.400 5.500H8M5.600 2.900L8.300 5.500 5.600 8.100" fill="none" stroke="#dfe3ec" stroke-width="1.600"/></svg>
<svg style="left:46.0px;top:24.3px" width="13" height="13" viewBox="0 0 13 13"><path d="M2 6.500V12.500H11.600V6.500" fill="#f0f0f4" stroke="#3b3b3b" stroke-width="1.200"/><path d="M0.500 7.200L6.600 1 12.700 7.200" fill="none" stroke="#3b3b3b" stroke-width="1.400"/><path d="M9.400 3.600V0.800" stroke="#3b3b3b" stroke-width="1.200"/><rect x="5.300" y="8.300" width="2.600" height="4.200" fill="#3b3b3b"/></svg>
<svg style="left:66.0px;top:24.3px" width="13.5" height="13" viewBox="0 0 13.5 13"><path d="M5.400 0.600h3l0.800 1h4v6.300H5.400z" fill="#dcb67a"/><rect x="0.800" y="5.300" width="7.800" height="6.600" fill="#e8eaf2" stroke="#3b3b3b" stroke-width="1.200"/><rect x="0.800" y="5.300" width="7.800" height="1.800" fill="#3b3b3b"/><path d="M1 3.500c0.500-1.700 2-2.200 3.500-2.200" fill="none" stroke="#00539c" stroke-width="1.300"/><path d="M3.800 0l2.200 1.400-2.200 1.500z" fill="#00539c"/><path d="M13 9.200c-0.300 1.900-1.500 2.700-3 2.700" fill="none" stroke="#00539c" stroke-width="1.300"/><path d="M10.600 10.400L8.800 11.900l1.800 1.100z" fill="#00539c"/></svg>
<svg style="left:85.2px;top:29.7px" width="5.2" height="3.2" viewBox="0 0 6 4"><path d="M0 0h6L3 3.400z" fill="#1e1e1e"/></svg>
<svg style="left:105.5px;top:24.3px" width="12" height="13" viewBox="0 0 12 13"><path d="M0.200 0.400h4.400L3 2.400v1.800H1.800V2.400z" fill="#3b3b3b"/><circle cx="7" cy="8.200" r="4.200" fill="none" stroke="#3b3b3b" stroke-width="1.200"/><path d="M7 5.600v2.900h2.400" fill="none" stroke="#3b3b3b" stroke-width="1.100"/></svg>
<svg style="left:123.2px;top:29.7px" width="5.2" height="3.2" viewBox="0 0 6 4"><path d="M0 0h6L3 3.400z" fill="#1e1e1e"/></svg>
<svg style="left:135.4px;top:25.3px" width="11" height="11.5" viewBox="0 0 11 11.5"><path d="M10 2.900H1.400M4.200 0.300L1.300 2.900l2.900 2.600" fill="none" stroke="#3b3b3b" stroke-width="1.600"/><path d="M1 8.400H9.600M6.800 5.800L9.700 8.400 6.800 11" fill="none" stroke="#3b3b3b" stroke-width="1.600"/></svg>
<svg style="left:154.5px;top:24.6px" width="12" height="13.5" viewBox="0 0 12 13.5"><path d="M9.700 5.200A4.300 4.300 0 1 1 5.600 3.200" fill="none" stroke="#00539c" stroke-width="2"/><path d="M5.200 0.300L9.600 3 5.200 6z" fill="#00539c"/></svg>
<svg style="left:174.5px;top:25.3px" width="11" height="11" viewBox="0 0 11 11"><path d="M4.400 2.200V0.600h6v6H8.600" fill="#9aa0ad" stroke="#6f7480" stroke-width="1"/><path d="M2.400 4.200V2.400h6.200v6.200H6.800" fill="#9aa0ad" stroke="#6f7480" stroke-width="1"/><rect x="0.600" y="4.300" width="6.800" height="6" fill="#dfe3ec" stroke="#6f7480" stroke-width="1.200"/><rect x="2.200" y="6.700" width="3.600" height="1.400" fill="#00539c"/></svg>
<svg style="left:193.0px;top:24.5px" width="13" height="12.5" viewBox="0 0 13 12.5"><path d="M0.600 8V0.600h4.600" fill="none" stroke="#555" stroke-width="1.100"/><path d="M7 2.400h3l2.400 2.400v5.800h-1.400" fill="none" stroke="#555" stroke-width="1.100"/><path d="M3.400 3.400h4.400l2.200 2.200v6.300H3.400z" fill="#e9ecf3" stroke="#555" stroke-width="1.100"/><path d="M5 6.500h2.500M5 8.200h3.400M5 9.900h2.500" stroke="#555" stroke-width="0.800"/></svg>
<svg style="left:220.2px;top:27.3px" width="11.5" height="7" viewBox="0 0 11.5 7"><path d="M4.400 0.400L1 3.500l3.400 3.100M7.100 0.400l3.400 3.100-3.400 3.100" fill="none" stroke="#3b3b3b" stroke-width="1.600"/></svg>
<svg style="left:239.1px;top:24.5px" width="13" height="13" viewBox="0 0 13 13"><defs><mask id="wma"><rect x="-1" y="-1" width="15" height="15" fill="#fff"/><path d="M9.300 3.400L13.500 -0.800" stroke="#000" stroke-width="2.900" stroke-linecap="round"/></mask></defs><circle cx="8.500" cy="4.300" r="4.100" fill="#3b3b3b" mask="url(#wma)"/><path d="M6.600 6.300L1.400 11.400" stroke="#3b3b3b" stroke-width="2.600" stroke-linecap="round"/></svg>
<div class="a" style="left:258.3px;top:31.7px;width:13px;height:1.100px;background:#1e1e1e"></div>
<div class="a" style="left:263.8px;top:29.4px;width:7.500px;height:3.200px;background:#1e1e1e"></div>
<svg style="left:267.0px;top:46.8px" width="11" height="11" viewBox="0 0 11 11"><circle cx="6.800" cy="4" r="2.900" fill="none" stroke="#555" stroke-width="1.500"/><path d="M4.700 6.200L0.700 10.300" stroke="#555" stroke-width="1.900" fill="none"/></svg>
<svg style="left:282.5px;top:51.8px" width="5.2" height="3.2" viewBox="0 0 6 4"><path d="M0 0h6L3 3.400z" fill="#555"/></svg>
<svg style="left:12.0px;top:68.6px" width="12.2" height="12" viewBox="0 0 12.2 12"><path d="M0 0h12v9.800H8.200V8.700h2.700V1.600H0z" fill="#3b3b3b"/><path d="M0 4.800l1 -0.500 1.600 1.300L5 3.400l1.600 0.700v6.200L5 11 2.600 8.800 1 10.100 0 9.600zM1 6.100v2.200l1-1.100zM5 5.500L3.500 7.200 5 8.900z" fill="#68217a"/></svg>
<svg style="left:27.8px;top:85.3px" width="12.4" height="10.5" viewBox="0 0 12.4 10.5"><path d="M0 0h12.200v9.900H8.800V8.800h2.300V1.800H0z" fill="#3b3b3b"/><circle cx="4" cy="6.900" r="4" fill="#3c9a3e"/><path d="M0.400 5.600h7.200M0.400 8.200h7.200M2.700 3.200v7.400M5.300 3.200v7.400" stroke="#c8e6c8" stroke-width="0.600" fill="none"/></svg>
<svg style="left:43.5px;top:101.8px" width="12.5" height="10.5" viewBox="0 0 12.5 10.5"><path d="M3.200 7.300H2.600a2.100 2.100 0 0 1-0.200-4.200 2.900 2.900 0 0 1 5.500-1 2.300 2.300 0 0 1 3.700 1.900 1.700 1.700 0 0 1-0.700 3.300H9.400" fill="none" stroke="#555" stroke-width="1"/><path d="M4.600 5h3.500L6.900 6.800v1H5.800v-1z" fill="#555"/><path d="M6.300 7.400v2.800" stroke="#555" stroke-width="1.100"/></svg>
<svg style="left:43.5px;top:115.8px" width="13" height="13" viewBox="0 0 13 13"><defs><mask id="wmb"><rect x="-1" y="-1" width="15" height="15" fill="#fff"/><path d="M9.300 3.400L13.500 -0.800" stroke="#000" stroke-width="2.900" stroke-linecap="round"/></mask></defs><circle cx="8.500" cy="4.300" r="4.100" fill="#3b3b3b" mask="url(#wmb)"/><path d="M6.600 6.300L1.400 11.400" stroke="#3b3b3b" stroke-width="2.600" stroke-linecap="round"/></svg>
<div class="a" style="left:43.6px;top:135.8px;width:2.600px;height:4.100px;background:#3b3b3b"></div>
<div class="a" style="left:47.2px;top:137.3px;width:2.400px;height:1.200px;background:#3b3b3b"></div>
<div class="a" style="left:50.9px;top:135.1px;width:5.300px;height:5.300px;background:#3b3b3b"></div>
<svg style="left:44.2px;top:148.5px" width="12.2" height="10" viewBox="0 0 12.2 10"><path d="M0 1.800h5.400l1.200-1.800h5.600v9.800H0z" fill="#dcb67a"/><path d="M7 1.100h4.600" stroke="#f0d9b0" stroke-width="0.800"/></svg>
<svg style="left:45.0px;top:166.3px" width="11" height="6.5" viewBox="0 0 11 6.5"><path d="M4.800 1.500A2.700 2.700 0 1 0 4.800 4.900" fill="none" stroke="#388a34" stroke-width="1.500"/><path d="M6.400 2.100h4M6.400 4.300h4" stroke="#388a34" stroke-width="1.300"/></svg>
<svg style="left:43.5px;top:179.3px" width="13" height="12.8" viewBox="0 0 13 12.8"><path d="M5.200 8.900V10.500H12.400V3L10 0.600H4.200V3.400" fill="#fff" stroke="#3b3b3b" stroke-width="1.100"/><path d="M9.800 0.600V3.200h2.600" fill="none" stroke="#3b3b3b" stroke-width="0.900"/><path d="M0.600 4v1.600c0 1.200 0.800 2 2 2s2-0.800 2-2V4M2.600 7.600V12.500" fill="none" stroke="#3b3b3b" stroke-width="1.500"/></svg>
<svg style="left:42.8px;top:197.1px" width="14" height="10" viewBox="0 0 14 10"><circle cx="8.900" cy="4.900" r="4.300" fill="#e6e7ee" stroke="#3b3b3b" stroke-width="1"/><path d="M4.600 4.900h8.600M8.900 0.600v8.600" stroke="#3b3b3b" stroke-width="0.900"/><ellipse cx="8.900" cy="4.900" rx="2" ry="4.300" fill="none" stroke="#3b3b3b" stroke-width="0.700"/><path d="M0.400 2.700h2.400M0.400 5h2.400" stroke="#666" stroke-width="0.900"/></svg>
<svg style="left:59.5px;top:211.9px" width="11" height="11" viewBox="0 0 11 11"><path d="M2.200 5.600V10.500H10.500V3.500L8.200 1.200H6" fill="#fff" stroke="#3b3b3b" stroke-width="1.100"/><path d="M8 1.200V3.700h2.500" fill="none" stroke="#3b3b3b" stroke-width="0.900"/><path d="M0 2.400h3.600" stroke="#00539c" stroke-width="1.500"/><path d="M2.800 0L5.600 2.400 2.800 4.800z" fill="#00539c"/></svg>
<svg style="left:43.5px;top:227.1px" width="13" height="12.8" viewBox="0 0 13 12.8"><path d="M5.200 8.900V10.500H12.400V3L10 0.600H4.200V3.400" fill="#fff" stroke="#3b3b3b" stroke-width="1.100"/><path d="M9.800 0.600V3.200h2.600" fill="none" stroke="#3b3b3b" stroke-width="0.900"/><path d="M0.600 4v1.600c0 1.200 0.800 2 2 2s2-0.800 2-2V4M2.600 7.600V12.500" fill="none" stroke="#3b3b3b" stroke-width="1.500"/></svg>
</div>
</body>
</html>
